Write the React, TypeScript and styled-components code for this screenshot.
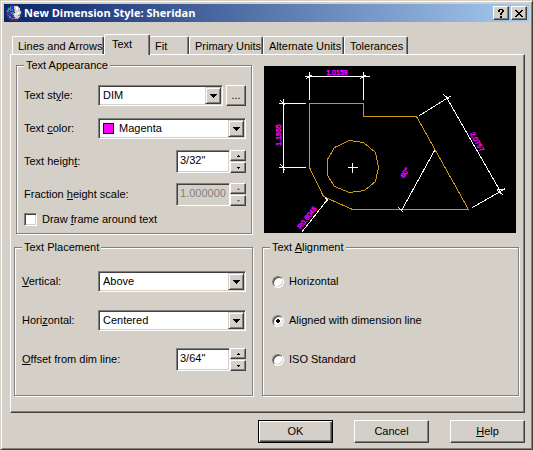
import React, { useState } from 'react';
import styled, { createGlobalStyle, css } from 'styled-components';

const face = '#d4d0c8';
const shadow = '#808080';
const dark = '#404040';
const light = '#ffffff';

const raised = css`
  border: 1px solid;
  border-color: ${light} ${dark} ${dark} ${light};
  box-shadow: inset -1px -1px ${shadow};
`;

const sunken = css`
  border: 1px solid;
  border-color: ${shadow} ${light} ${light} ${shadow};
  box-shadow: inset 1px 1px ${dark}, inset -1px -1px ${face};
`;

const GlobalStyle = createGlobalStyle`
  * { box-sizing: border-box; }
  body {
    margin: 0;
    background: ${face};
    color: #000;
    font: 11px/13px "Liberation Sans", Arial, sans-serif;
  }
  button, input, select { font: inherit; color: inherit; margin: 0; }
`;

const Window = styled.main`
  padding: 3px;
  background: ${face};
  border: 1px solid;
  border-color: ${face} ${dark} ${dark} ${face};
  box-shadow: inset 1px 1px ${light}, inset -1px -1px ${shadow};
`;

const TitleBar = styled.header`
  display: flex;
  align-items: center;
  gap: 2px;
  height: 18px;
  padding: 0 2px;
  background: linear-gradient(to right, #0a246a, #a6caf0);
`;

const Title = styled.h1`
  flex: 1;
  margin: 0;
  color: #fff;
  font: bold 11px/16px "Open Sans", Tahoma, sans-serif;
  white-space: nowrap;
`;

const CaptionButton = styled.button`
  display: grid;
  place-items: center;
  width: 16px;
  height: 14px;
  padding: 0;
  background: ${face};
  ${raised}
`;

const Body = styled.div`
  padding: 12px 4px 3px 6px;
`;

const TabList = styled.div`
  display: flex;
  align-items: flex-end;
  padding: 0 2px;
`;

const Tab = styled.button<{ $width: number; $active?: boolean }>`
  width: ${p => p.$width}px;
  height: 18px;
  padding: 1px 0 0 5px;
  background: ${face};
  text-align: left;
  white-space: nowrap;
  border: 1px solid;
  border-color: ${light} ${dark} transparent ${light};
  border-bottom: 0;
  border-radius: 2px 2px 0 0;
  box-shadow: inset -1px 0 ${shadow};
  ${p => p.$active && css`
    position: relative;
    z-index: 1;
    height: 21px;
    margin: 0 -1px -1px 0;
    padding: 0 0 2px 7px;
  `}
`;

const Page = styled.div`
  display: grid;
  grid-template-columns: 239fr 257fr;
  gap: 7px 9px;
  padding: 4px 5px 16px 3px;
  border: 1px solid;
  border-color: ${light} ${dark} ${dark} ${light};
  box-shadow: inset -1px -1px ${shadow};
`;

const Group = styled.fieldset<{ $inset?: boolean }>`
  min-width: 0;
  margin: ${p => (p.$inset ? '0 1px 0 2px' : '0')};
  padding: ${p => (p.$inset ? '7px 5px 5px 7px' : '8px 6px 16px 7px')};
  border: 1px solid ${shadow};
  box-shadow: 1px 1px ${light}, inset 1px 1px ${light};
`;

const Legend = styled.legend`
  height: 13px;
  padding: 0 2px;
  background: ${face};
`;

const Row = styled.div<{ $height: number }>`
  display: flex;
  align-items: center;
  height: ${p => p.$height}px;
`;

const Label = styled.label<{ $width?: number }>`
  flex: ${p => (p.$width ? `0 0 ${p.$width}px` : '1')};
  white-space: nowrap;
`;

const ChoiceLabel = styled.label`
  padding-left: 5px;
`;

const ComboBox = styled.div`
  display: grid;
  flex: 1;
  grid-template-columns: 1fr 16px;
  align-items: center;
  height: 21px;
  padding: 1px;
  background: #fff;
  ${sunken}
`;

const ComboSelect = styled.select<{ $swatch?: boolean }>`
  grid-area: 1 / 1 / 2 / 3;
  width: 100%;
  height: 17px;
  padding: 0 16px 0 ${p => (p.$swatch ? 19 : 3)}px;
  appearance: none;
  background: transparent;
  border: 0;
  border-radius: 0;
`;

const Swatch = styled.span`
  grid-area: 1 / 1;
  width: 11px;
  height: 11px;
  margin-left: 3px;
  background: #f0f;
  border: 1px solid #000;
  pointer-events: none;
`;

const DropMark = styled.span`
  grid-area: 1 / 2;
  display: grid;
  place-items: center;
  height: 17px;
  background: ${face};
  border: 1px solid;
  border-color: ${face} ${dark} ${dark} ${face};
  box-shadow: inset 1px 1px ${light}, inset -1px -1px ${shadow};
  pointer-events: none;
`;

const BrowseButton = styled.button`
  width: 20px;
  height: 21px;
  margin-left: 3px;
  padding: 0;
  background: ${face};
  ${raised}
`;

const Field = styled.input`
  width: 54px;
  height: 23px;
  padding: 0 2px 4px 3px;
  background: #fff;
  border-radius: 0;
  ${sunken}
  &:disabled {
    background: ${face};
    color: ${shadow};
  }
`;

const Spinner = styled.div`
  display: grid;
  gap: 1px;
  width: 16px;
  height: 23px;
`;

const SpinButton = styled.button`
  display: grid;
  place-items: center;
  height: 11px;
  padding: 0;
  background: ${face};
  color: #000;
  ${raised}
  &:disabled { color: ${shadow}; }
`;

const CheckBox = styled.input`
  width: 13px;
  height: 13px;
  appearance: none;
  background: #fff;
  ${sunken}
  &:checked {
    background: linear-gradient(#000, #000) center / 5px 5px no-repeat #fff;
  }
`;

const Radio = styled.input`
  width: 12px;
  height: 12px;
  margin-left: 2px;
  appearance: none;
  background: #fff;
  border-radius: 50%;
  ${sunken}
  &:checked {
    background: radial-gradient(circle, #000 2px, #fff 2px);
  }
`;

const Preview = styled.svg`
  display: block;
  width: calc(100% - 5px);
  height: auto;
  margin: 7px 3px 0 2px;
  background: #000;
`;

const Footer = styled.footer`
  display: flex;
  justify-content: flex-end;
  gap: 21px;
  padding-top: 7px;
`;

const PushButton = styled.button<{ $default?: boolean }>`
  width: 75px;
  height: 23px;
  padding: 0;
  background: ${face};
  ${raised}
  ${p => p.$default && css`
    border-color: #000;
    box-shadow: inset 1px 1px ${light}, inset -1px -1px ${dark}, inset -2px -2px ${shadow};
  `}
`;

const tabs = [
  { name: 'Lines and Arrows', width: 92 },
  { name: 'Text', width: 46 },
  { name: 'Fit', width: 40 },
  { name: 'Primary Units', width: 74 },
  { name: 'Alternate Units', width: 81 },
  { name: 'Tolerances', width: 64 },
];

function AppIcon() {
  return (
    <svg width="16" height="16" viewBox="0 0 16 16" shapeRendering="crispEdges" aria-hidden="true">
      <path d="M5 0h6l3 2 2 4v5l-3 4-3 1H5l-3-2-2-4V5l2-3z" fill="#34346c" />
      <path d="M8 1h4l2 3 1 3-1 4-3 3-3-2-1-3 2-2-1-3z" fill="#d4d0c8" />
      <path d="M10 2h2v3h-2zM11 7h2v2h-2zM9 9h2v1H9z" fill="#fff" />
      <path d="M2 3h3v2H3v2H1V5h1zM5 7h2v2H5zM3 11h2v2H3zM6 4h1v2H6z" fill="#20a0a0" />
      <path d="M5 1h2v3H5zM3 7h2v3H3zM6 10h2v2H6zM1 8h1v2H1z" fill="#3434f0" />
      <path d="M4 5h2v1H4zM2 10h1v1H2zM5 13h3v1H5zM7 7h1v2H7z" fill="#b040b0" />
      <path d="M8 4h1v3H8zM8 13h3v1H8zM12 10h2v1h-2zM4 2h1v1H4z" fill="#909090" />
    </svg>
  );
}

function Arrow({ size, up }: { size: 'large' | 'small'; up?: boolean }) {
  if (size === 'large') {
    return (
      <svg width="7" height="4" viewBox="0 0 7 4" shapeRendering="crispEdges" aria-hidden="true">
        <path d="M0 0h7v1H0zM1 1h5v1H1zM2 2h3v1H2zM3 3h1v1H3z" />
      </svg>
    );
  }
  return (
    <svg width="3" height="2" viewBox="0 0 3 2" shapeRendering="crispEdges" aria-hidden="true">
      <path fill="currentColor" d={up ? 'M1 0h1v1H1zM0 1h3v1H0z' : 'M0 0h3v1H0zM1 1h1v1H1z'} />
    </svg>
  );
}

interface ComboProps {
  id: string;
  options: string[];
  swatch?: boolean;
}

function Combo({ id, options, swatch }: ComboProps) {
  return (
    <ComboBox>
      <ComboSelect id={id} $swatch={swatch}>
        {options.map(o => <option key={o}>{o}</option>)}
      </ComboSelect>
      {swatch && <Swatch />}
      <DropMark><Arrow size="large" /></DropMark>
    </ComboBox>
  );
}

function SpinField({ id, value, disabled }: { id: string; value: string; disabled?: boolean }) {
  return (
    <>
      <Field id={id} type="text" defaultValue={value} disabled={disabled} />
      <Spinner>
        <SpinButton type="button" aria-label="Increase" disabled={disabled}><Arrow size="small" up /></SpinButton>
        <SpinButton type="button" aria-label="Decrease" disabled={disabled}><Arrow size="small" /></SpinButton>
      </Spinner>
    </>
  );
}

function DimensionPreview() {
  return (
    <Preview viewBox="0 0 252 167" role="img" aria-label="Dimension style preview">
      <g transform="translate(.5 .5)" fill="none" strokeWidth="1" shapeRendering="crispEdges">
        <g stroke="#d09810">
          <path d="M45 37H99V50H152L204 143H88L59 130L45 101Z" />
          <path d="M85 74L99 76L111 86L114 101L111 115L100 124L85 126L70 120L63 109V93L70 81Z" />
        </g>
        <g stroke="#fff">
          <path d="M83 101H93M88 96V106" />
          <path d="M40 10H105M45 5V33M99 5V33M42 12L48 8M96 12L102 8" />
          <path d="M19 32V106M14 37H41M14 101H41M16 34L21 39M16 98L21 104" />
          <path d="M63 133L37 166M61 131L63 135" />
          <path d="M182 31L236 125M155 49L187 29M208 141L241 122M179 28L185 33M233 124L239 129M232 123H239" />
          <path d="M170 84L137 144M134 141L139 146" />
        </g>
      </g>
      <g
        fill="#f0f"
        stroke="#f0f"
        strokeWidth=".4"
        fontFamily="Liberation Sans, Arial, sans-serif"
        fontSize="7"
        textAnchor="middle"
      >
        <text x="73" y="9">1.0159</text>
        <text transform="translate(17 69) rotate(-90)">1.1955</text>
        <text transform="translate(45 153) rotate(-52)">R0.8045</text>
        <text transform="translate(211 77) rotate(60)">2.0757</text>
        <text transform="translate(143 108) rotate(-60)">60°</text>
      </g>
    </Preview>
  );
}

export default function App() {
  const [tab, setTab] = useState('Text');
  return (
    <>
      <GlobalStyle />
      <Window>
        <TitleBar>
          <AppIcon />
          <Title>New Dimension Style: Sheridan</Title>
          <CaptionButton type="button" aria-label="Help">
            <svg width="6" height="9" viewBox="0 0 6 9" shapeRendering="crispEdges">
              <path d="M1 0h4v1H1zM0 1h2v2H0zM4 1h2v2H4zM3 3h2v1H3zM2 4h2v2H2zM2 7h2v2H2z" />
            </svg>
          </CaptionButton>
          <CaptionButton type="button" aria-label="Close">
            <svg width="8" height="7" viewBox="0 0 8 7" shapeRendering="crispEdges">
              <path d="M0 0h2v1H0zM6 0h2v1H6zM1 1h2v1H1zM5 1h2v1H5zM2 2h4v1H2zM3 3h2v1H3zM2 4h4v1H2zM1 5h2v1H1zM5 5h2v1H5zM0 6h2v1H0zM6 6h2v1H6z" />
            </svg>
          </CaptionButton>
        </TitleBar>
        <Body>
          <TabList role="tablist">
            {tabs.map(t => (
              <Tab
                key={t.name}
                type="button"
                role="tab"
                aria-selected={t.name === tab}
                $width={t.width}
                $active={t.name === tab}
                onClick={() => setTab(t.name)}
              >
                {t.name}
              </Tab>
            ))}
          </TabList>
          <Page role="tabpanel">
            <Group $inset>
              <Legend>Text Appearance</Legend>
              <Row $height={33}>
                <Label $width={74} htmlFor="style">Text st<u>y</u>le:</Label>
                <Combo id="style" options={['DIM']} />
                <BrowseButton type="button" aria-label="Browse text styles">...</BrowseButton>
              </Row>
              <Row $height={33}>
                <Label $width={74} htmlFor="color">Text <u>c</u>olor:</Label>
                <Combo id="color" options={['Magenta']} swatch />
              </Row>
              <Row $height={33}>
                <Label htmlFor="height">Text heigh<u>t</u>:</Label>
                <SpinField id="height" value={'3/32"'} />
              </Row>
              <Row $height={33}>
                <Label htmlFor="fraction">Fraction <u>h</u>eight scale:</Label>
                <SpinField id="fraction" value="1.000000" disabled />
              </Row>
              <Row $height={17}>
                <CheckBox id="frame" type="checkbox" />
                <ChoiceLabel htmlFor="frame">Draw <u>f</u>rame around text</ChoiceLabel>
              </Row>
            </Group>
            <DimensionPreview />
            <Group>
              <Legend>Text Placement</Legend>
              <Row $height={39}>
                <Label $width={76} htmlFor="vertical"><u>V</u>ertical:</Label>
                <Combo id="vertical" options={['Above', 'Centered', 'Outside', 'JIS']} />
              </Row>
              <Row $height={39}>
                <Label $width={76} htmlFor="horizontal">Hori<u>z</u>ontal:</Label>
                <Combo id="horizontal" options={['Centered']} />
              </Row>
              <Row $height={39}>
                <Label htmlFor="offset"><u>O</u>ffset from dim line:</Label>
                <SpinField id="offset" value={'3/64"'} />
              </Row>
            </Group>
            <Group>
              <Legend>Text <u>A</u>lignment</Legend>
              <Row $height={39}>
                <Radio id="align-h" type="radio" name="align" />
                <ChoiceLabel htmlFor="align-h">Horizontal</ChoiceLabel>
              </Row>
              <Row $height={39}>
                <Radio id="align-d" type="radio" name="align" defaultChecked />
                <ChoiceLabel htmlFor="align-d">Aligned with dimension line</ChoiceLabel>
              </Row>
              <Row $height={39}>
                <Radio id="align-i" type="radio" name="align" />
                <ChoiceLabel htmlFor="align-i">ISO Standard</ChoiceLabel>
              </Row>
            </Group>
          </Page>
          <Footer>
            <PushButton type="button" $default>OK</PushButton>
            <PushButton type="button">Cancel</PushButton>
            <PushButton type="button"><u>H</u>elp</PushButton>
          </Footer>
        </Body>
      </Window>
    </>
  );
}
